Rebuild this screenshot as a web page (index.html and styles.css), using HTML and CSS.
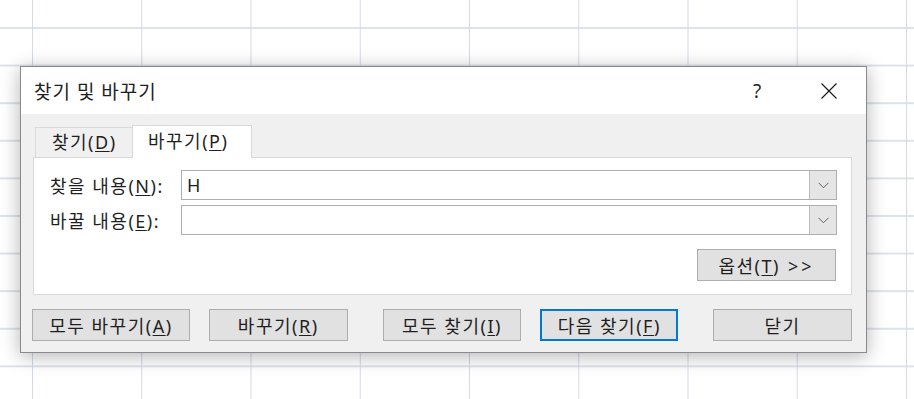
FILE: index.html
```html
<!DOCTYPE html>
<html lang="ko">
<head>
  <meta charset="UTF-8" />
  <title>찾기 및 바꾸기</title>
  <link rel="stylesheet" href="styles.css">
</head>
<body>

    <div class="dialog">
        <div class="titlebar">
            <span class="title">찾기 및 바꾸기</span>
            <span class="help">?</span>
            <span class="close">
                <svg width="16" height="16" viewBox="0 0 16 16">
                    <path d="M0.5 0.5 L15.5 15.5 M15.5 0.5 L0.5 15.5" stroke="#1a1a1a" stroke-width="1.2" fill="none"/>
                </svg>
            </span>
        </div>

        <div class="content">
            <div class="tabs">
                <div class="tab">찾기(<u>D</u>)</div>
                <div class="tab active">바꾸기(<u>P</u>)</div>
            </div>

            <div class="panel">
                <div class="row">
                    <span class="label">찾을 내용(<u>N</u>):</span>
                    <div class="combo">
                        <span class="value">H</span>
                        <span class="drop">
                            <svg width="11" height="7" viewBox="0 0 11 7"><path d="M0.5 0.8 L5.5 5.8 L10.5 0.8" stroke="#5f5f5f" stroke-width="1" fill="none"/></svg>
                        </span>
                    </div>
                </div>
                <div class="row">
                    <span class="label">바꿀 내용(<u>E</u>):</span>
                    <div class="combo">
                        <span class="value"></span>
                        <span class="drop">
                            <svg width="11" height="7" viewBox="0 0 11 7"><path d="M0.5 0.8 L5.5 5.8 L10.5 0.8" stroke="#5f5f5f" stroke-width="1" fill="none"/></svg>
                        </span>
                    </div>
                </div>
                <div class="options-row">
                    <button class="btn options">옵션(<u>T</u>) <span class="arrows">&gt;&gt;</span></button>
                </div>
            </div>

            <div class="actions">
                <button class="btn wide">모두 바꾸기(<u>A</u>)</button>
                <button class="btn">바꾸기(<u>R</u>)</button>
                <button class="btn far">모두 찾기(<u>I</u>)</button>
                <button class="btn default">다음 찾기(<u>F</u>)</button>
                <button class="btn far">닫기</button>
            </div>
        </div>
    </div>

</body>
</html>
```

FILE: styles.css
```css
html, body
{
    margin: 0;
    padding: 0;
    height: 399px;
    overflow: hidden;
}

body
{
    font-family: "Noto Sans", "Noto Sans CJK KR", sans-serif;
    font-size: 18px;
    letter-spacing: 1.5px;
    color: #1f1f1f;
    background-color: #fff;
    background-image:
        linear-gradient(to right, #d3d9e5 1px, transparent 1px),
        linear-gradient(to bottom, #dde2eb 2px, transparent 2px);
    background-size: 109.25px 100%, 100% 37.6px;
    background-position: 32px 0, 0 27px;
}

u
{
    text-decoration: underline;
    text-underline-offset: 2px;
}

.dialog
{
    box-sizing: border-box;
    width: 847px;
    height: 287px;
    margin: 66px 0 0 20px;
    background: #f0f0f0;
    border: 1px solid #8a8a8a;
    box-shadow: 0 3px 18px rgba(0, 0, 0, 0.3);
}

.titlebar
{
    height: 47px;
    background: #fff;
    display: flex;
    align-items: center;
}

.title
{
    flex: 1;
    padding-left: 13px;
    font-size: 19px;
    letter-spacing: 1px;
}

.help
{
    width: 70px;
    text-align: center;
    font-size: 19px;
    letter-spacing: 0;
}

.close
{
    width: 74px;
    display: flex;
    justify-content: center;
}

.content
{
    padding: 11px 14px 0 12px;
}

.tabs
{
    height: 32px;
    display: flex;
    align-items: flex-end;
    padding-left: 2px;
}

.tab
{
    box-sizing: border-box;
    height: 30px;
    line-height: 29px;
    padding-left: 16px;
    width: 97px;
    border-top: 1px solid #d9d9d9;
    border-left: 1px solid #d9d9d9;
    background: #f0f0f0;
}

.tab.active
{
    position: relative;
    z-index: 1;
    height: 33px;
    width: 120px;
    padding-left: 15px;
    margin-bottom: -1px;
    line-height: 31px;
    background: #fff;
    border-right: 1px solid #d9d9d9;
}

.panel
{
    box-sizing: border-box;
    height: 138px;
    background: #fff;
    border: 1px solid #d9d9d9;
    padding: 12px 14px 0 16px;
}

.row
{
    display: flex;
    align-items: center;
    height: 30px;
    margin-bottom: 5px;
}

.label
{
    width: 131px;
}

.combo
{
    box-sizing: border-box;
    width: 656px;
    height: 30px;
    border: 1px solid #adadad;
    display: flex;
    align-items: stretch;
}

.value
{
    flex: 1;
    padding-left: 5px;
    line-height: 28px;
}

.drop
{
    width: 26px;
    background: #e5e5e5;
    border-left: 1px solid #bcbcbc;
    display: flex;
    align-items: center;
    justify-content: center;
}

.options-row
{
    display: flex;
    justify-content: flex-end;
    padding-top: 9px;
    padding-right: 1px;
}

.arrows
{
    letter-spacing: 3px;
    margin-left: 2px;
}

.btn
{
    box-sizing: border-box;
    width: 139px;
    height: 32px;
    padding: 0;
    font-family: inherit;
    font-size: 18px;
    letter-spacing: 1.5px;
    color: #1f1f1f;
    background: #e1e1e1;
    border: 1px solid #adadad;
}

.actions
{
    display: flex;
    gap: 19px;
    margin: 14px 0 0 -1px;
}

.btn.wide
{
    width: 158px;
}

.btn.far
{
    margin-left: 16px;
}

.btn.default
{
    width: 138px;
    border: 2px solid #0078d7;
}
```
